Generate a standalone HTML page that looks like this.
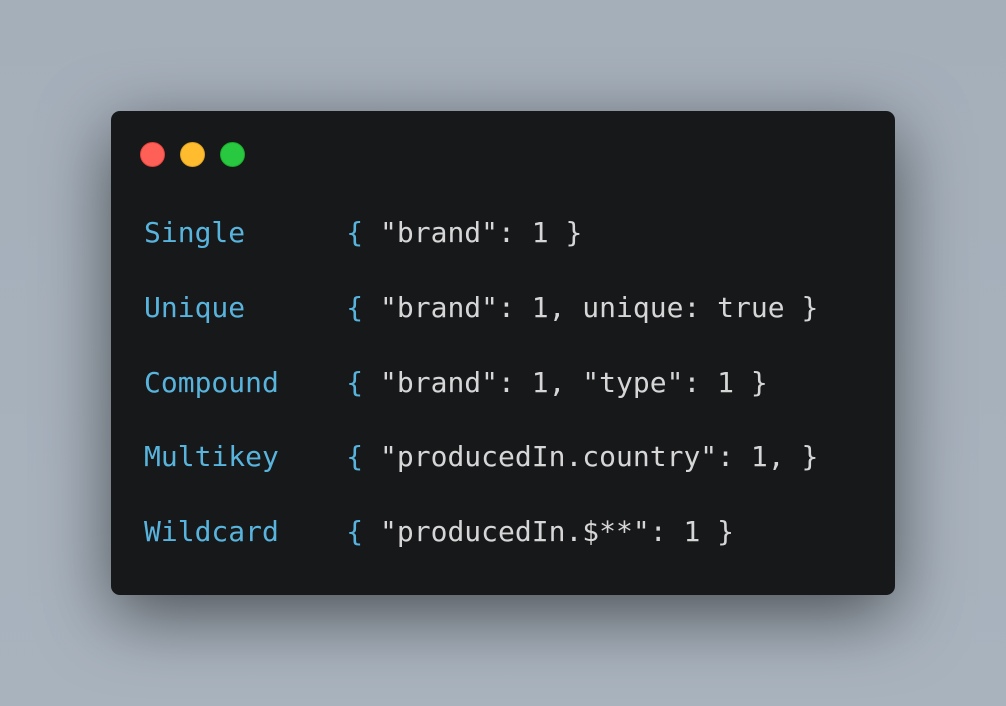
<!DOCTYPE html>
<html><head><style>
html,body{margin:0;padding:0}
body{width:1006px;height:706px;background:linear-gradient(180deg,#a5afba,#a9b3be);position:relative;overflow:hidden}
.win{position:absolute;left:111px;top:111px;width:784px;height:484px;background:#17181a;border-radius:9px;box-shadow:0 20px 70px rgba(0,0,0,0.55)}
.d{position:absolute;top:31px;width:23px;height:23px;border-radius:50%}
.code{position:absolute;left:33px;top:85px;margin:0;font-family:"DejaVu Sans Mono","Liberation Mono",monospace;font-size:28px;line-height:74.75px;color:#d6d6d6;white-space:pre}
.k{color:#58b4dd}
</style></head><body>
<div class="win">
<div class="d" style="left:29px;background:#fe5f57;border:1px solid #e0443e"></div>
<div class="d" style="left:69px;background:#febc2e;border:1px solid #dea123"></div>
<div class="d" style="left:109px;background:#28c840;border:1px solid #1aab29"></div>
<pre class="code"><span class="k">Single      {</span> "brand": 1 }
<span class="k">Unique      {</span> "brand": 1, unique: true }
<span class="k">Compound    {</span> "brand": 1, "type": 1 }
<span class="k">Multikey    {</span> "producedIn.country": 1, }
<span class="k">Wildcard    {</span> "producedIn.$**": 1 }</pre>
</div>
</body></html>
